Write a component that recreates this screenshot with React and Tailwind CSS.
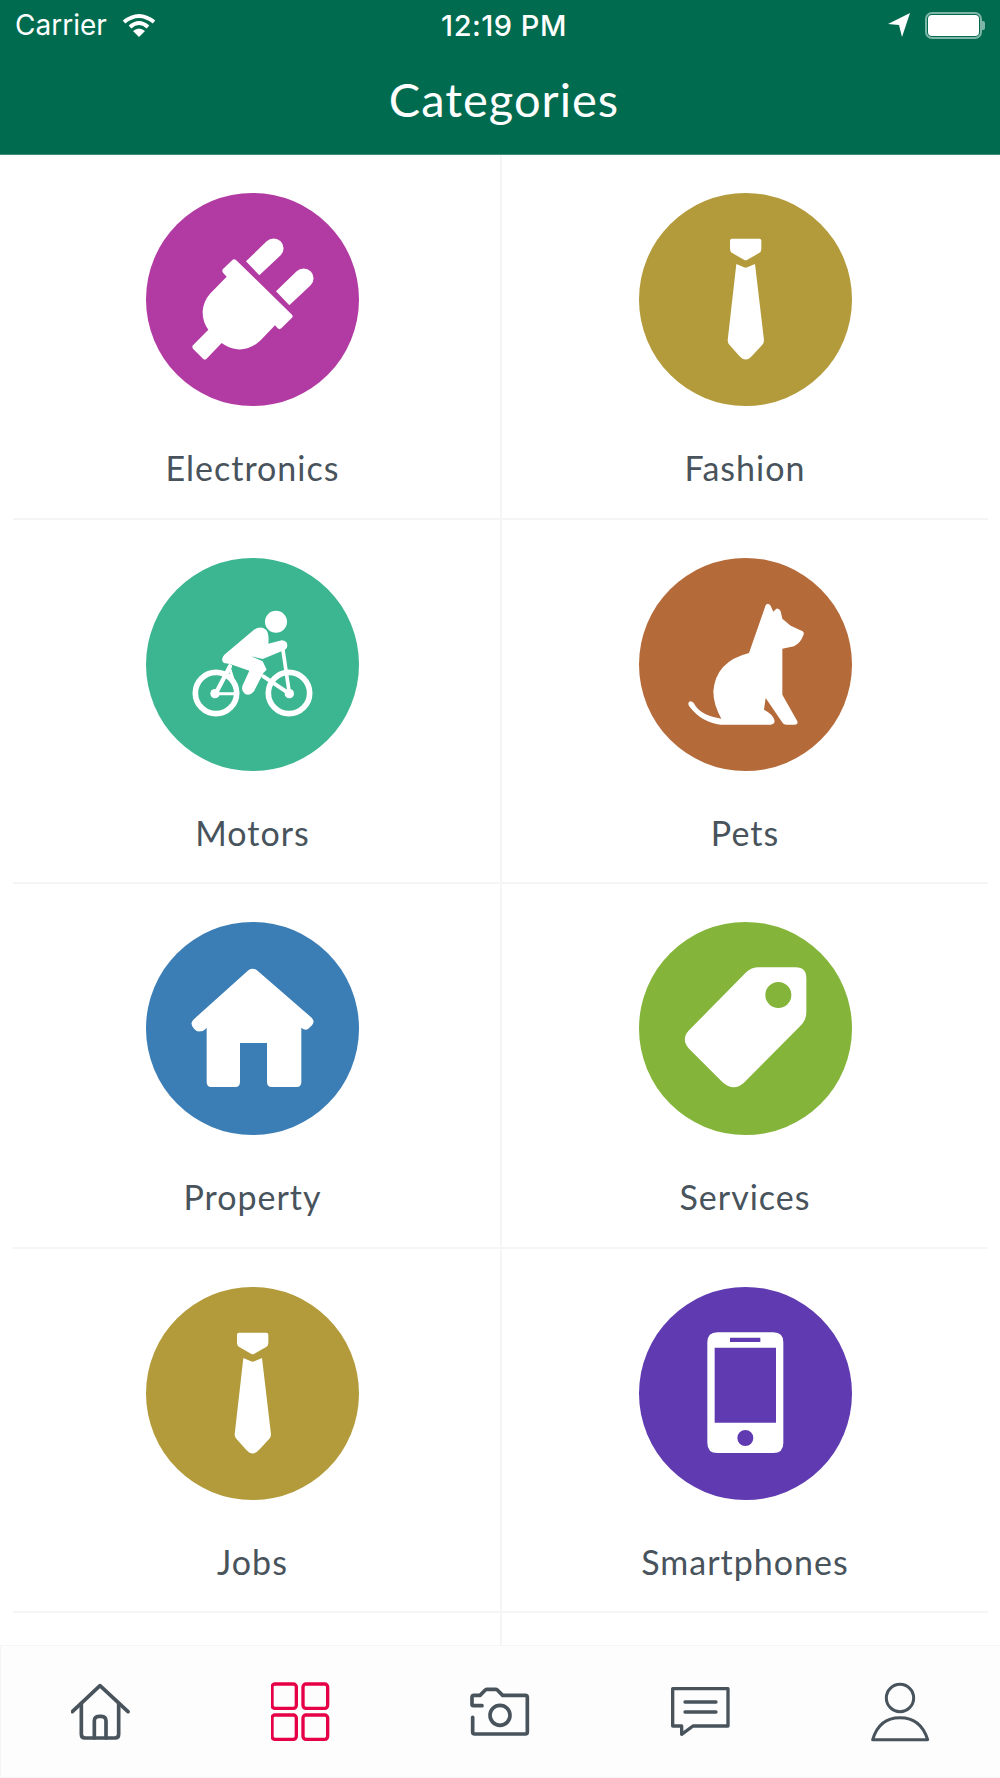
const LEFT_BOX = "48 40 639 639";
const RIGHT_BOX = "25 40 639 639";

const PlugIcon = () => (
  <svg viewBox={LEFT_BOX} className="w-full h-full" fill="#fff">
    <path d="M348 245 L410 185 A28 28 0 0 1 452 227 L388 287 Z" />
    <path d="M438 335 L500 275 A28 28 0 0 1 542 317 L478 377 Z" />
    <path d="M279 268 L308 240 Q313 237 318 241 L486 405 Q490 410 486 414 L454 446 Q448 451 443 446 L435 437 L392 482 Q360 512 322 509 Q296 506 275 490 L229 538 Q224 542 219 537 L189 507 Q185 502 189 497 L235 450 Q217 425 218 395 Q220 365 240 342 L290 291 L279 279 Q275 273 279 268 Z" />
  </svg>
);

const TieIcon = () => (
  <svg viewBox={RIGHT_BOX} className="w-full h-full" fill="#fff">
    <path d="M304 177 H386 Q392 177 392 183 V208 Q392 217 384 221 L350 240 Q345 243 340 240 L306 221 Q298 217 298 208 V183 Q298 177 304 177 Z" />
    <path d="M317 253 L340 263 Q345 265 350 263 L373 253 L400 482 Q400 490 395 495 L366 527 Q345 552 324 527 L296 495 Q291 490 291 482 Z" />
  </svg>
);

const BikeIcon = () => (
  <svg viewBox={LEFT_BOX} className="w-full h-full" fill="none" stroke="#fff" strokeLinecap="round" strokeLinejoin="round">
    <circle cx="438" cy="231" r="33" fill="#fff" stroke="none" />
    <circle cx="258" cy="445" r="62" strokeWidth="17" />
    <circle cx="477" cy="445" r="62" strokeWidth="17" />
    <path d="M258 445 L300 365" strokeWidth="13" />
    <path d="M258 447 H322 L300 375" strokeWidth="9" />
    <circle cx="255" cy="447" r="14" fill="#fff" stroke="none" />
    <circle cx="478" cy="447" r="14" fill="#fff" stroke="none" />
    <path d="M458 310 L478 445" strokeWidth="11" />
    <path d="M400 395 L478 447" strokeWidth="12" />
    <path
      fill="#fff"
      stroke="none"
      d="M283 330 L372 255 Q392 242 408 255 Q418 265 415 297 L455 287 Q472 288 472 303 Q471 315 458 318 L398 343 L364 335 L398 350 L410 375 L400 385 L372 440 Q360 455 345 448 Q332 438 338 422 L358 378 L300 358 L282 355 Q270 345 283 330 Z"
    />
  </svg>
);

const DogIcon = () => (
  <svg viewBox={RIGHT_BOX} className="w-full h-full" fill="#fff">
    <path d="M405 182 Q411 172 419 182 L428 201 L437 192 Q445 190 450 200 L455 222 L480 243 L516 260 Q522 265 518 272 Q510 295 490 305 L455 312 V450 L500 530 Q503 540 492 540 H466 Q458 540 454 532 L405 460 L400 495 Q430 510 432 530 Q430 540 420 540 H270 Q215 535 178 488 Q168 475 178 470 Q188 470 193 482 Q215 515 272 522 Q248 480 248 440 Q255 350 355 325 Z" />
  </svg>
);

const HouseIcon = () => (
  <svg viewBox={LEFT_BOX} className="w-full h-full" fill="#fff">
    <path d="M356 184 Q368 176 380 184 L545 327 Q556 338 546 350 L535 360 Q525 368 514 357 V520 Q514 535 500 535 H425 Q411 535 411 520 V403 H330 V520 Q330 535 316 535 H244 Q230 535 230 520 V357 Q222 368 210 368 Q200 370 192 360 Q178 345 190 333 Z" />
  </svg>
);

const TagIcon = () => (
  <svg viewBox={RIGHT_BOX} className="w-full h-full" fill="#fff">
    <path
      fillRule="evenodd"
      d="M385 176 H495 Q527 176 527 208 V310 Q527 335 508 353 L342 520 Q310 552 275 520 L175 420 Q150 392 175 365 L345 192 Q362 176 385 176 Z M443 220 A39 39 0 1 0 443 298 A39 39 0 1 0 443 220 Z"
    />
  </svg>
);

const PhoneIcon = () => (
  <svg viewBox={RIGHT_BOX} className="w-full h-full" fill="#fff">
    <path
      fillRule="evenodd"
      d="M260 176 H428 Q458 176 458 206 V508 Q458 538 428 538 H260 Q230 538 230 508 V206 Q230 176 260 176 Z M298 192 V205 H389 V192 Z M252 222 V447 H436 V222 Z M344 469 A24 24 0 1 0 344 517 A24 24 0 1 0 344 469 Z"
    />
  </svg>
);

const categories = [
  { name: "Electronics", color: "bg-[#b23aa3]", Icon: PlugIcon },
  { name: "Fashion", color: "bg-[#b39a3a]", Icon: TieIcon },
  { name: "Motors", color: "bg-[#3cb591]", Icon: BikeIcon },
  { name: "Pets", color: "bg-[#b56a3a]", Icon: DogIcon },
  { name: "Property", color: "bg-[#3b7db5]", Icon: HouseIcon },
  { name: "Services", color: "bg-[#84b53a]", Icon: TagIcon },
  { name: "Jobs", color: "bg-[#b39a3a]", Icon: TieIcon },
  { name: "Smartphones", color: "bg-[#5f3ab0]", Icon: PhoneIcon },
];

const rows = [
  categories.slice(0, 2),
  categories.slice(2, 4),
  categories.slice(4, 6),
  categories.slice(6, 8),
];

const CategoryCell = ({ name, color, Icon }) => (
  <div className="flex flex-col items-center pt-[38px]">
    <div className={`w-[213px] h-[213px] rounded-full ${color}`}>
      <Icon />
    </div>
    <span className="mt-[42px] text-[34px] leading-[40px] tracking-[1px] text-[#48535c] font-['Lato',sans-serif]">
      {name}
    </span>
  </div>
);

const tabIconProps = {
  className: "w-[60px] h-[60px]",
  fill: "none",
  strokeLinecap: "round",
  strokeLinejoin: "round",
};

const tabs = [
  <svg key="home" viewBox="213 275 180 180" stroke="#48535c" strokeWidth="11" {...tabIconProps}>
    <path d="M217 364 L300 286 L384 364" />
    <path d="M244 340 V432 Q244 443 255 443 H345 Q356 443 356 432 V340" />
    <path d="M283 443 V392 Q283 378 297 378 H304 Q318 378 318 392 V443" />
  </svg>,
  <svg key="grid" viewBox="813 275 180 180" stroke="#e60045" strokeWidth="10" {...tabIconProps}>
    <rect x="816" y="281" width="73" height="73" rx="9" />
    <rect x="909" y="281" width="74" height="73" rx="9" />
    <rect x="816" y="374" width="73" height="73" rx="9" />
    <rect x="909" y="374" width="74" height="73" rx="9" />
  </svg>,
  <svg key="camera" viewBox="60 66 180 180" stroke="#48535c" strokeWidth="11" {...tabIconProps}>
    <path d="M96 137 H70 Q66 137 66 133 V112 Q66 106 72 106 H90 L106 90 Q108 88 112 88 H136 Q140 88 142 90 L158 106 H226 Q232 106 232 112 V216 Q232 222 226 222 H74 Q68 222 68 216 V172" />
    <circle cx="150" cy="166" r="30" />
  </svg>,
  <svg key="chat" viewBox="508 275 180 180" stroke="#48535c" strokeWidth="10" {...tabIconProps}>
    <path d="M516 295 H682 V407 H577 L543 432 V407 H516 Z" />
    <path d="M553 335 H646 M553 365 H646" />
  </svg>,
  <svg key="user" viewBox="1108 275 180 180" stroke="#48535c" strokeWidth="9" {...tabIconProps}>
    <circle cx="1198" cy="323" r="41" />
    <path d="M1116 448 Q1135 382 1198 382 Q1261 382 1281 448 Z" />
  </svg>,
];

const App = () => {
  return (
    <div className="w-[1000px] h-[1778px] flex flex-col bg-white overflow-hidden">
      <header className="h-[155px] shrink-0 flex flex-col bg-[#006b4f] border-b border-[#3d8f78] text-white font-['Inter',sans-serif]">
        <div className="h-[50px] flex items-center justify-between pl-[15px] pr-[15px]">
          <div className="flex items-center gap-[15px] w-[300px]">
            <span className="text-[28px] leading-none">Carrier</span>
            <svg viewBox="0 0 34 24" className="w-[34px] h-[24px]" fill="none" stroke="#fff" strokeWidth="4">
              <path d="M2 9 Q17 -3 32 9" />
              <path d="M8 14 Q17 6 26 14" />
              <path d="M17 24 L11 18 Q17 13 23 18 Z" fill="#fff" stroke="none" />
            </svg>
          </div>
          <span className="text-[29px] leading-none font-medium tracking-[0.5px] ml-[8px]">12:19 PM</span>
          <div className="flex items-center justify-end gap-[15px] w-[300px]">
            <svg viewBox="0 0 22 24" className="w-[22px] h-[24px]" fill="#fff">
              <path d="M22 0 L14 24 L11 12 L0 11 Z" />
            </svg>
            <div className="flex items-center">
              <div className="w-[57px] h-[27px] p-[1px] border-2 border-[#7fb5a7] rounded-[7px]">
                <div className="w-full h-full bg-white rounded-[4px]" />
              </div>
              <div className="w-[3px] h-[9px] bg-[#7fb5a7] rounded-r-[2px]" />
            </div>
          </div>
        </div>
        <h1 className="mt-[19px] pl-[8px] text-center text-[47px] leading-[60px] tracking-[1px] font-normal font-['Lato',sans-serif]">
          Categories
        </h1>
      </header>

      <main className="flex-1 min-h-0 overflow-hidden pl-[13px] pr-[12px]">
        {rows.map((row) => (
          <div key={row[0].name} className="h-[364.6px] grid grid-cols-[489px_486px] border-b-2 border-[#f5f5f5]">
            <div className="border-r-2 border-[#f5f5f5] pr-[8px]">
              <CategoryCell {...row[0]} />
            </div>
            <CategoryCell {...row[1]} />
          </div>
        ))}
        <div className="h-[40px] w-[489px] border-r-2 border-[#f5f5f5]" />
      </main>

      <nav className="h-[133px] shrink-0 flex bg-[#fdfdfd] border-y border-l border-[#f5f5f5]">
        {tabs.map((tab) => (
          <div key={tab.key} className="flex-1 flex items-center justify-center">
            {tab}
          </div>
        ))}
      </nav>
    </div>
  );
};

export default App;
